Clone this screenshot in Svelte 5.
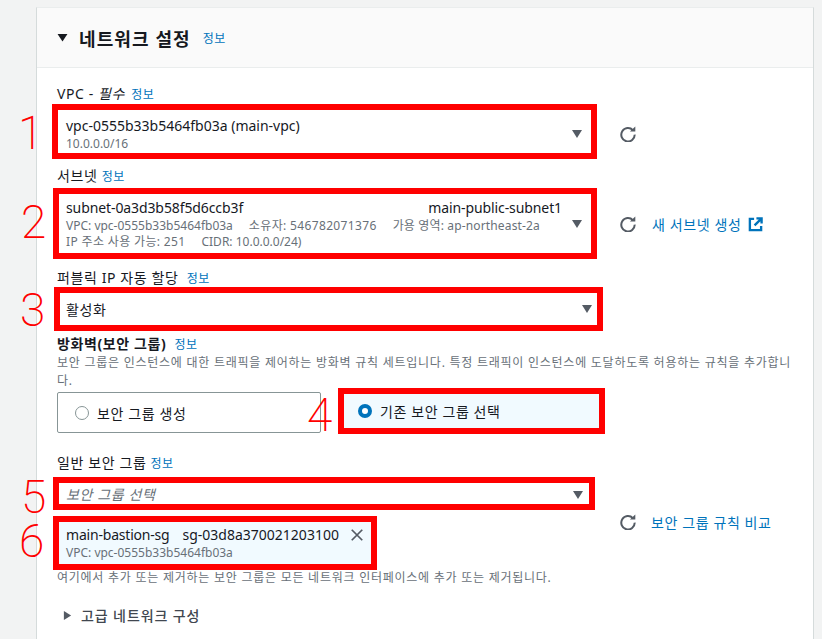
<script>
	const vpcId = 'vpc-0555b33b5464fb03a'
</script>

{#snippet caret()}
	<svg class="caret" viewBox="0 0 12 10" aria-hidden="true"><path d="M1 1h10L6 9z" /></svg>
{/snippet}

{#snippet refresh()}
	<svg class="refresh" viewBox="0 0 16 16" aria-hidden="true">
		<path d="M12.9 4.2A6.7 6.7 0 1 0 14.7 8.6" />
		<path class="head" d="M9.9 5.6h5.4V0.4z" />
	</svg>
{/snippet}

<div class="page">
	<section class="card">
		<header class="head-bar">
			<svg class="open" viewBox="0 0 12 10" aria-hidden="true"><path d="M0.5 1h11L6 9.5z" /></svg>
			<h2>네트워크 설정</h2>
			<span class="info">정보</span>
		</header>

		<div class="body">
			<div class="label l-vpc">VPC - <i>필수</i> <span class="info">정보</span></div>
			<div class="row">
				<div class="mark b1">
					<span class="num n1">1</span>
					<div class="text">
						<div class="main">{vpcId} (main-vpc)</div>
						<div class="sub">10.0.0.0/16</div>
					</div>
					{@render caret()}
				</div>
				<div class="side s1">{@render refresh()}</div>
			</div>

			<div class="label l-sub">서브넷 <span class="info">정보</span></div>
			<div class="row">
				<div class="mark b2">
					<span class="num n2">2</span>
					<div class="text">
						<div class="main split"><span>subnet-0a3d3b58f5d6ccb3f</span><span>main-public-subnet1</span></div>
						<div class="sub tags"><span>VPC: {vpcId}</span><span class="ks">소유자: 546782071376</span><span class="kz">가용 영역: ap-northeast-2a</span></div>
						<div class="sub tags"><span class="ks">IP 주소 사용 가능: 251</span><span>CIDR: 10.0.0.0/24)</span></div>
					</div>
					{@render caret()}
				</div>
				<div class="side s2">
					{@render refresh()}
					<span class="link">새 서브넷 생성</span>
					<svg class="ext" viewBox="0 0 16 16" aria-hidden="true">
						<path d="M6.5 2H2v12h12V9.5" />
						<path d="M9 1.5h5.5V7M14 2L7 9" />
					</svg>
				</div>
			</div>

			<div class="label l-ip">퍼블릭 IP 자동 할당 <span class="info gap">정보</span></div>
			<div class="mark b3">
				<span class="num n3">3</span>
				<div class="ko">활성화</div>
				{@render caret()}
			</div>

			<div class="label l-fw"><b>방화벽(보안 그룹)</b> <span class="info gap">정보</span></div>
			<p class="desc">보안 그룹은 인스턴스에 대한 트래픽을 제어하는 방화벽 규칙 세트입니다. 특정 트래픽이 인스턴스에 도달하도록 허용하는 규칙을 추가합니다.</p>
			<div class="tiles">
				<div class="tile ko">
					<span class="radio"></span>
					<span>보안 그룹 생성</span>
				</div>
				<div class="mark b4 ko">
					<span class="num n4">4</span>
					<span class="radio on"></span>
					<span>기존 보안 그룹 선택</span>
				</div>
			</div>

			<div class="label l-gen">일반 보안 그룹 <span class="info">정보</span></div>
			<div class="row">
				<div class="stack">
					<div class="mark b5">
						<span class="num n5">5</span>
						<i class="placeholder ko">보안 그룹 선택</i>
						{@render caret()}
					</div>
					<div class="mark b6">
						<span class="num n6">6</span>
						<div class="text">
							<div class="main token"><span>main-bastion-sg</span><span>sg-03d8a370021203100</span></div>
							<div class="sub">VPC: {vpcId}</div>
						</div>
						<svg class="close" viewBox="0 0 16 16" aria-hidden="true"><path d="M2 2l12 12M14 2L2 14" /></svg>
					</div>
				</div>
				<div class="side s3">
					{@render refresh()}
					<span class="link">보안 그룹 규칙 비교</span>
				</div>
			</div>
			<p class="desc hint">여기에서 추가 또는 제거하는 보안 그룹은 모든 네트워크 인터페이스에 추가 또는 제거됩니다.</p>

			<div class="advanced ko">
				<svg viewBox="0 0 10 12" aria-hidden="true"><path d="M1 1v10l8-5z" /></svg>
				<span>고급 네트워크 구성</span>
			</div>
		</div>
	</section>
</div>

<style>
	:global(body) {
		margin: 0;
		background: #f2f3f3;
	}
	.page {
		height: 639px;
		overflow: hidden;
		padding: 7px 8px 0 36px;
		box-sizing: border-box;
		font-family: "Noto Sans", "Noto Sans CJK KR", sans-serif;
		font-size: 14px;
		color: #16191f;
	}
	.card {
		background: #fff;
		border-left: 1px solid #d5dbdb;
		border-right: 1px solid #d5dbdb;
		border-top: 1px solid #eaeded;
		height: 700px;
	}
	.head-bar {
		display: flex;
		align-items: center;
		height: 59px;
		padding-left: 20px;
		background: #fafafa;
		border-bottom: 1px solid #eaeded;
	}
	.open {
		width: 11px;
		height: 9px;
		margin-right: 11px;
		fill: #16191f;
	}
	h2 {
		margin: 0 12px 0 0;
		font-size: 18px;
		font-weight: 700;
		letter-spacing: 1.1px;
	}
	.info {
		font-size: 12px;
		font-weight: 400;
		font-style: normal;
		letter-spacing: 0.4px;
		color: #0073bb;
	}
	.info.gap {
		margin-left: 4px;
	}
	.body {
		padding: 16px 0 0 20px;
	}
	.label {
		height: 20px;
		line-height: 20px;
		letter-spacing: 0.6px;
	}
	.label i {
		margin-right: 2px;
	}
	.label b {
		font-weight: 700;
	}
	.ko {
		letter-spacing: 0.6px;
	}
	.ks {
		letter-spacing: 0.35px;
	}
	.kz {
		letter-spacing: 0.15px;
	}
	.l-sub { margin-top: 7px; height: 22px; }
	.l-ip { margin-top: 9px; height: 19px; }
	.l-fw { margin-top: 3px; }
	.l-gen { margin-top: 19px; height: 24px; line-height: 20px; }
	.row {
		display: flex;
	}
	.mark {
		position: relative;
		display: flex;
		align-items: center;
		box-sizing: border-box;
		border: 6px solid #f00;
		flex: none;
	}
	.num {
		position: absolute;
		font-family: Roboto, sans-serif;
		font-size: 46px;
		line-height: 30px;
		font-weight: 200;
		letter-spacing: 0;
		color: #f00;
	}
	.text {
		flex: 1;
		min-width: 0;
	}
	.main {
		line-height: 20px;
	}
	.sub {
		font-size: 12px;
		line-height: 16px;
		color: #687078;
	}
	.split {
		display: flex;
		justify-content: space-between;
		padding-right: 9px;
		letter-spacing: -0.1px;
	}
	.tags {
		display: flex;
		gap: 16px;
	}
	.caret {
		width: 12px;
		height: 10px;
		flex: none;
		fill: #545b64;
	}
	.b1 {
		width: 545px;
		height: 55px;
		margin-left: -5px;
		padding: 5px 8px 0;
	}
	.n1 { left: -40px; top: 8px; }
	.b2 {
		width: 544px;
		height: 71px;
		margin-left: -4px;
		padding: 0 8px 0 7px;
	}
	.n2 { left: -38px; top: 13px; }
	.b3 {
		width: 549px;
		height: 44px;
		margin-left: -3px;
		padding: 0 4px 0 6px;
		justify-content: space-between;
	}
	.n3 { left: -40px; top: 2px; }
	.b4 {
		width: 267px;
		height: 46px;
		margin: -4px 0 0 17px;
		padding-left: 14px;
		gap: 8px;
		background: #f1faff;
	}
	.n4 { left: -37px; top: 6px; }
	.b5 {
		width: 542px;
		height: 33px;
		margin-left: -4px;
		padding: 0 5px 0 7px;
		justify-content: space-between;
	}
	.b5 .caret { margin-top: 3px; }
	.n5 { left: -38px; top: -1px; }
	.b6 {
		width: 324px;
		height: 54px;
		margin: 6px 0 0 -4px;
		padding: 0 7px;
		background: #f1faff;
		gap: 4px;
	}
	.n6 { left: -40px; top: 4px; }
	.placeholder {
		color: #687078;
	}
	.token {
		display: flex;
		gap: 13px;
	}
	.token span:first-child {
		letter-spacing: -0.2px;
	}
	.close {
		width: 14px;
		height: 14px;
		margin-top: -16px;
		flex: none;
		fill: none;
		stroke: #545b64;
		stroke-width: 2;
	}
	.side {
		display: flex;
		align-items: center;
		height: 16px;
		flex: none;
	}
	.s1 { margin: 22px 0 0 23px; }
	.s2 { margin: 28px 0 0 23px; }
	.s3 { margin: 37px 0 0 25px; }
	.refresh {
		width: 16px;
		height: 16px;
		margin-right: 16px;
		flex: none;
		fill: none;
		stroke: #545b64;
		stroke-width: 2;
	}
	.refresh .head {
		fill: #545b64;
		stroke: none;
	}
	.s3 .refresh { margin-right: 15px; }
	.link {
		color: #0073bb;
		letter-spacing: 0.6px;
	}
	.ext {
		width: 15px;
		height: 15px;
		margin-left: 7px;
		fill: none;
		stroke: #0073bb;
		stroke-width: 2.5;
	}
	.desc {
		margin: 0;
		width: 745px;
		font-size: 12px;
		line-height: 18px;
		letter-spacing: 0.75px;
		color: #687078;
	}
	.tiles {
		display: flex;
		margin-top: 2px;
	}
	.tile {
		display: flex;
		align-items: center;
		gap: 8px;
		box-sizing: border-box;
		width: 264px;
		height: 41px;
		padding-left: 17px;
		border: 1px solid #879596;
		border-radius: 2px;
	}
	.radio {
		width: 14px;
		height: 14px;
		box-sizing: border-box;
		border-radius: 50%;
		border: 1px solid #879596;
		flex: none;
	}
	.radio.on {
		border: 4px solid #0073bb;
		background: #fff;
	}
	.hint {
		margin-top: -1px;
	}
	.advanced {
		display: flex;
		align-items: center;
		gap: 9px;
		margin: 18px 0 0 6px;
		font-weight: 500;
		letter-spacing: 0.9px;
		color: #414750;
	}
	.advanced svg {
		width: 9px;
		height: 11px;
		fill: #545b64;
	}
</style>
